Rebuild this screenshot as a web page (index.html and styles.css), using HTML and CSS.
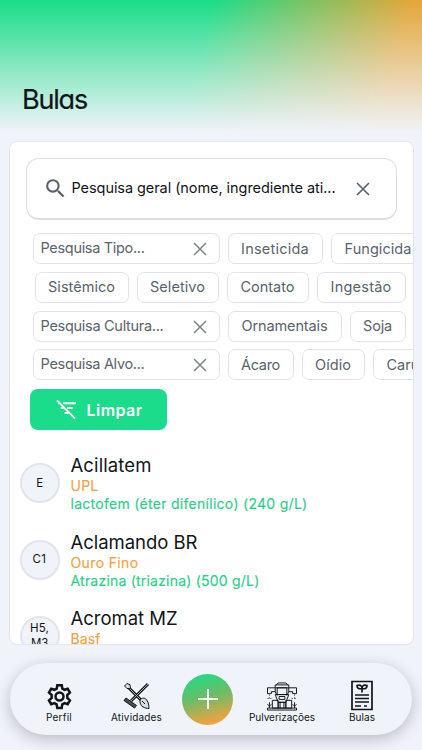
FILE: index.html
```html
<!DOCTYPE html>
<html lang="pt-BR">
<head>
<meta charset="utf-8">
<meta name="viewport" content="width=device-width, initial-scale=1">
<title>Bulas</title>
<link rel="stylesheet" href="styles.css">
</head>
<body>
<div class="app">
<header class="header"><h1><span class="fit" data-width="65">Bulas</span></h1></header>
<main class="panel">
  <div class="search">
    <svg class="search-icon" viewBox="0 0 24 24"><path d="M15.5 14h-.79l-.28-.27A6.47 6.47 0 0 0 16 9.5 6.5 6.5 0 1 0 9.5 16c1.61 0 3.09-.59 4.23-1.57l.27.28v.79l5 4.99L20.49 19zm-6 0a4.5 4.5 0 1 1 0-9 4.5 4.5 0 0 1 0 9z"/></svg>
    <span class="search-text"><span class="fit" data-width="264">Pesquisa geral (nome, ingrediente ati...</span></span>
    <svg class="close" viewBox="0 0 14 14"><path d="M1 1l12 12M13 1L1 13"/></svg>
  </div>
  <div class="filters">
    <div class="row">
      <div class="field"><span class="fit" data-width="104">Pesquisa Tipo...</span><svg class="close small" viewBox="0 0 14 14"><path d="M1 1l12 12M13 1L1 13"/></svg></div>
      <div class="chip w95"><span class="fit" data-width="68">Inseticida</span></div>
      <div class="chip w95"><span class="fit" data-width="67">Fungicida</span></div>
    </div>
    <div class="row modes">
      <div class="chip w94"><span class="fit" data-width="67">Sistêmico</span></div>
      <div class="chip w82"><span class="fit" data-width="55">Seletivo</span></div>
      <div class="chip w82"><span class="fit" data-width="54">Contato</span></div>
      <div class="chip w89"><span class="fit" data-width="61">Ingestão</span></div>
    </div>
    <div class="row">
      <div class="field"><span class="fit" data-width="123">Pesquisa Cultura...</span><svg class="close small" viewBox="0 0 14 14"><path d="M1 1l12 12M13 1L1 13"/></svg></div>
      <div class="chip w114"><span class="fit" data-width="86">Ornamentais</span></div>
      <div class="chip w56"><span class="fit" data-width="29">Soja</span></div>
    </div>
    <div class="row">
      <div class="field"><span class="fit" data-width="104">Pesquisa Alvo...</span><svg class="close small" viewBox="0 0 14 14"><path d="M1 1l12 12M13 1L1 13"/></svg></div>
      <div class="chip w66"><span class="fit" data-width="39">Ácaro</span></div>
      <div class="chip w63"><span class="fit" data-width="36">Oídio</span></div>
      <div class="chip w95"><span class="fit" data-width="67">Caruncho</span></div>
    </div>
  </div>
  <button class="clear" type="button">
    <svg viewBox="0 0 22 22"><path d="M1 1.5l19 19M7.5 4.5H21M11.5 9.5h6M9 14.5h4M2 4.5h2M5 9.5h3"/></svg>
    <span class="fit" data-width="56">Limpar</span>
  </button>
  <ul class="products">
    <li><div class="badge"><span class="fit" data-width="6.5">E</span></div><div class="info"><h2><span class="fit" data-width="81">Acillatem</span></h2><p class="brand"><span class="fit" data-width="28">UPL</span></p><p class="active"><span class="fit" data-width="237">lactofem (éter difenílico) (240 g/L)</span></p></div></li>
    <li><div class="badge"><span class="fit" data-width="14">C1</span></div><div class="info"><h2><span class="fit" data-width="127">Aclamando BR</span></h2><p class="brand"><span class="fit" data-width="68">Ouro Fino</span></p><p class="active"><span class="fit" data-width="189">Atrazina (triazina) (500 g/L)</span></p></div></li>
    <li><div class="badge"><span class="fit" data-width="19">H5,</span><span class="fit" data-width="17">M3</span></div><div class="info"><h2><span class="fit" data-width="107">Acromat MZ</span></h2><p class="brand"><span class="fit" data-width="30">Basf</span></p></div></li>
  </ul>
</main>
<nav class="nav">
  <a class="item"><svg class="gear" viewBox="0 0 26 26"><path d="M10.8 1.2h4.4l.7 3.4 2.1 1.2 3.2-1.1 2.2 3.8L20.8 11v3l2.6 2.4-2.2 3.8-3.2-1.1-2.2 1.3-.6 3.5h-4.4l-.7-3.5L8 19.1l-3.3 1.1-2.2-3.8L5.2 14v-3L2.5 8.5l2.2-3.8L8 5.8l2.2-1.2z"/><circle cx="13" cy="12.5" r="4"/></svg><span class="fit" data-width="26">Perfil</span></a>
  <a class="item tools-item"><svg class="tools" viewBox="0 0 28 28"><path class="thick" d="M5 5l15 15M25 2L8 19"/><path class="light" d="M5 5l15 15M25 2L8 19"/><path class="metal" d="M1.5 4L4 1.5l3 1.2.5 4L4 6.5z"/><path class="metal rake" d="M3 16l10.500 7.500-2 2.500L1 18.500z"/><path class="metal" d="M17 19.500c0-3 3-4 5-3 3 1.500 4 6 4 10-4 0-9-2-9-7z"/><path d="M19 19l3 3"/></svg><span class="fit" data-width="51">Atividades</span></a>
  <a class="add"><svg viewBox="0 0 20 20"><path d="M10 0v20M0 10h20"/></svg></a>
  <a class="item spray-item"><svg class="spray" viewBox="0 0 32 30"><path d="M10 3l2-2h8l2 2M9 3h14v3H9zM11 6h10v7H11zM1 6h8v4H5v2H1zM31 6h-8v4h4v2h4zM9 10l2 4M23 10l-2 4M9 13h14l-3 8h-8zM13 15h6v3h-6zM6 19h6v8H6zM20 19h6v8h-6zM12 21h8v6h-8zM14 21v6M18 21v6M1 27h30v2H1z"/><path d="M3 21v6M29 21v6M1 23l2 2 2-2M27 23l2 2 2-2"/><path class="drops" d="M3 13v4M1 17h5M29 13v4M26 17h5"/></svg><span class="fit" data-width="66">Pulverizações</span></a>
  <a class="item"><svg class="label-icon" viewBox="0 0 22 30"><path d="M1 1h20v28H1z"/><path d="M4 14.500h14M4 18h14M4 21.500h14M4 25.500h6M13 25.500h3M11 12V8C7 9 6 7 6 5c3-1 5 0 5 3 0-3 2-4 5-3 0 2-1 4-5 3"/></svg><span class="fit" data-width="26">Bulas</span></a>
</nav>
</div>
<script src="script.js"></script>
</body>
</html>
```
FILE: styles.css
```css
* { box-sizing: border-box; }
body { margin: 0; background: #f0f3f9; font-family: Lexend, Inter, sans-serif; color: #111518; }
h1, h2, p, ul { margin: 0; padding: 0; font-weight: 400; }
svg { display: block; flex: none; fill: none; stroke: currentColor; }
.fit { display: inline-block; white-space: nowrap; }
.app { height: 750px; overflow: hidden; display: flex; flex-direction: column; }
.header { height: 141px; flex: none; padding: 81px 22px 0; background: linear-gradient(to bottom, rgba(240,243,249,0) 0, #f0f3f9 132px), linear-gradient(105deg, #19dd88 0, #19dd88 46%, #e4a638 90%); }
h1 { font: 400 27px/38px Inter, sans-serif; font-feature-settings: "cv11"; -webkit-text-stroke: .2px; }
.panel { width: 405px; height: 504px; flex: none; margin-left: 8.5px; border: 1px solid #e2e5eb; border-radius: 8px; background: #fff; overflow: hidden; }
.search { height: 62px; width: 371px; margin: 16px 0 0 16px; border: 1px solid #dedfe2; border-bottom-width: 2px; border-radius: 13px; display: flex; align-items: center; padding: 0 26px 0 16px; }
.search-icon { width: 25px; height: 25px; fill: #59636d; stroke: none; }
.search-text { margin-left: 4px; font: 400 14.5px/20px Inter, sans-serif; width: 264px; padding-bottom: 1px; }
.close { width: 14px; height: 14px; margin-left: auto; color: #59636d; stroke-width: 1.7; }
.small { color: #808386; stroke-width: 1.5; position: relative; top: 1px; }
.filters { margin: 13px 0 0 23px; display: flex; flex-direction: column; gap: 7.8px; }
.row { display: flex; gap: 8px; height: 31px; }
.modes { padding-left: 2px; }
.field, .chip { height: 31px; border: 1px solid #e2e3e9; border-radius: 7px; color: #59636d; font: 400 14.5px/20px Inter, sans-serif; display: flex; align-items: center; flex: none; }
.field { width: 187px; padding: 0 12px 1px 7px; }
.chip { justify-content: center; }
.w56 { width: 56px; } .w63 { width: 63px; } .w66 { width: 66px; } .w82 { width: 82px; } .w89 { width: 89px; } .w94 { width: 94px; } .w95 { width: 95px; } .w114 { width: 114px; }
.clear { display: flex; align-items: center; gap: 10px; width: 137px; height: 41px; margin: 9px 0 0 20px; padding: 0 0 0 26px; border: 0; border-radius: 8px; background: #1bdc8a; color: #fff; font: 600 16px/20px Inter, sans-serif; }
.clear svg { width: 21px; height: 21px; stroke-width: 2; }
.products { list-style: none; margin: 24px 0 0 10px; }
.products li { display: flex; gap: 11px; height: 76.5px; }
.badge { width: 40px; height: 40px; margin-top: 9px; border: 2px solid #e1e4e9; border-radius: 50%; background: #f0f3f9; display: flex; flex-direction: column; align-items: center; justify-content: center; font: 400 11.5px/15px Inter, sans-serif; flex: none; }
.info { white-space: nowrap; }
h2 { font: 400 18.5px/22px Inter, sans-serif; }
.brand { color: #f6a13f; font: 400 14px/19px Inter, sans-serif; }
.active { color: #2bce8b; font: 400 14px/18px Inter, sans-serif; }
.brand, .active { -webkit-text-stroke: .15px; }
.nav { width: 402px; height: 72px; margin: 18px 0 0 10px; border-radius: 36px; background: #f0f3f9; box-shadow: 0 4px 16px #0000003b; display: flex; align-items: center; padding: 0 23px; flex: none; }
.item { width: 52px; height: 58px; padding-bottom: 4px; display: flex; flex-direction: column; align-items: center; justify-content: flex-end; font: 400 10px/14px Inter, sans-serif; }
.tools-item { margin-left: 25px; width: 53px; }
.add { width: 51px; height: 51px; border-radius: 50%; margin-left: 19px; background: linear-gradient(165deg, #1bdc8a 5%, #6dbc66 45%, #f6a13f 90%); display: flex; align-items: center; justify-content: center; color: #fff; }
.add svg { width: 20px; height: 20px; stroke-width: 2; }
.spray-item { width: 68px; margin-left: 15px; }
.spray-item + .item { margin-left: 20px; }
.gear { width: 27px; height: 26px; stroke-width: 2.5; }
.tools { width: 28px; height: 28px; stroke-width: 1; }
.thick { stroke-width: 3; } .light { stroke: #a4a8ac; stroke-width: 1; } .metal { fill: #d9dde1; }
.metal.rake { fill: #4b5054; }
.spray { width: 32px; height: 29px; margin-bottom: -1px; stroke-width: 1; }
.drops { stroke-dasharray: 1 2; }
.label-icon { width: 22px; height: 31px; margin-bottom: -1px; stroke-width: 1.7; }
```
FILE: script.js
```js
for (const el of document.querySelectorAll(".fit")) {
  const count = Array.from(el.textContent).length;
  const difference = Number(el.dataset.width) - el.getBoundingClientRect().width;
  el.style.letterSpacing = `${difference / count}px`;
}
```
